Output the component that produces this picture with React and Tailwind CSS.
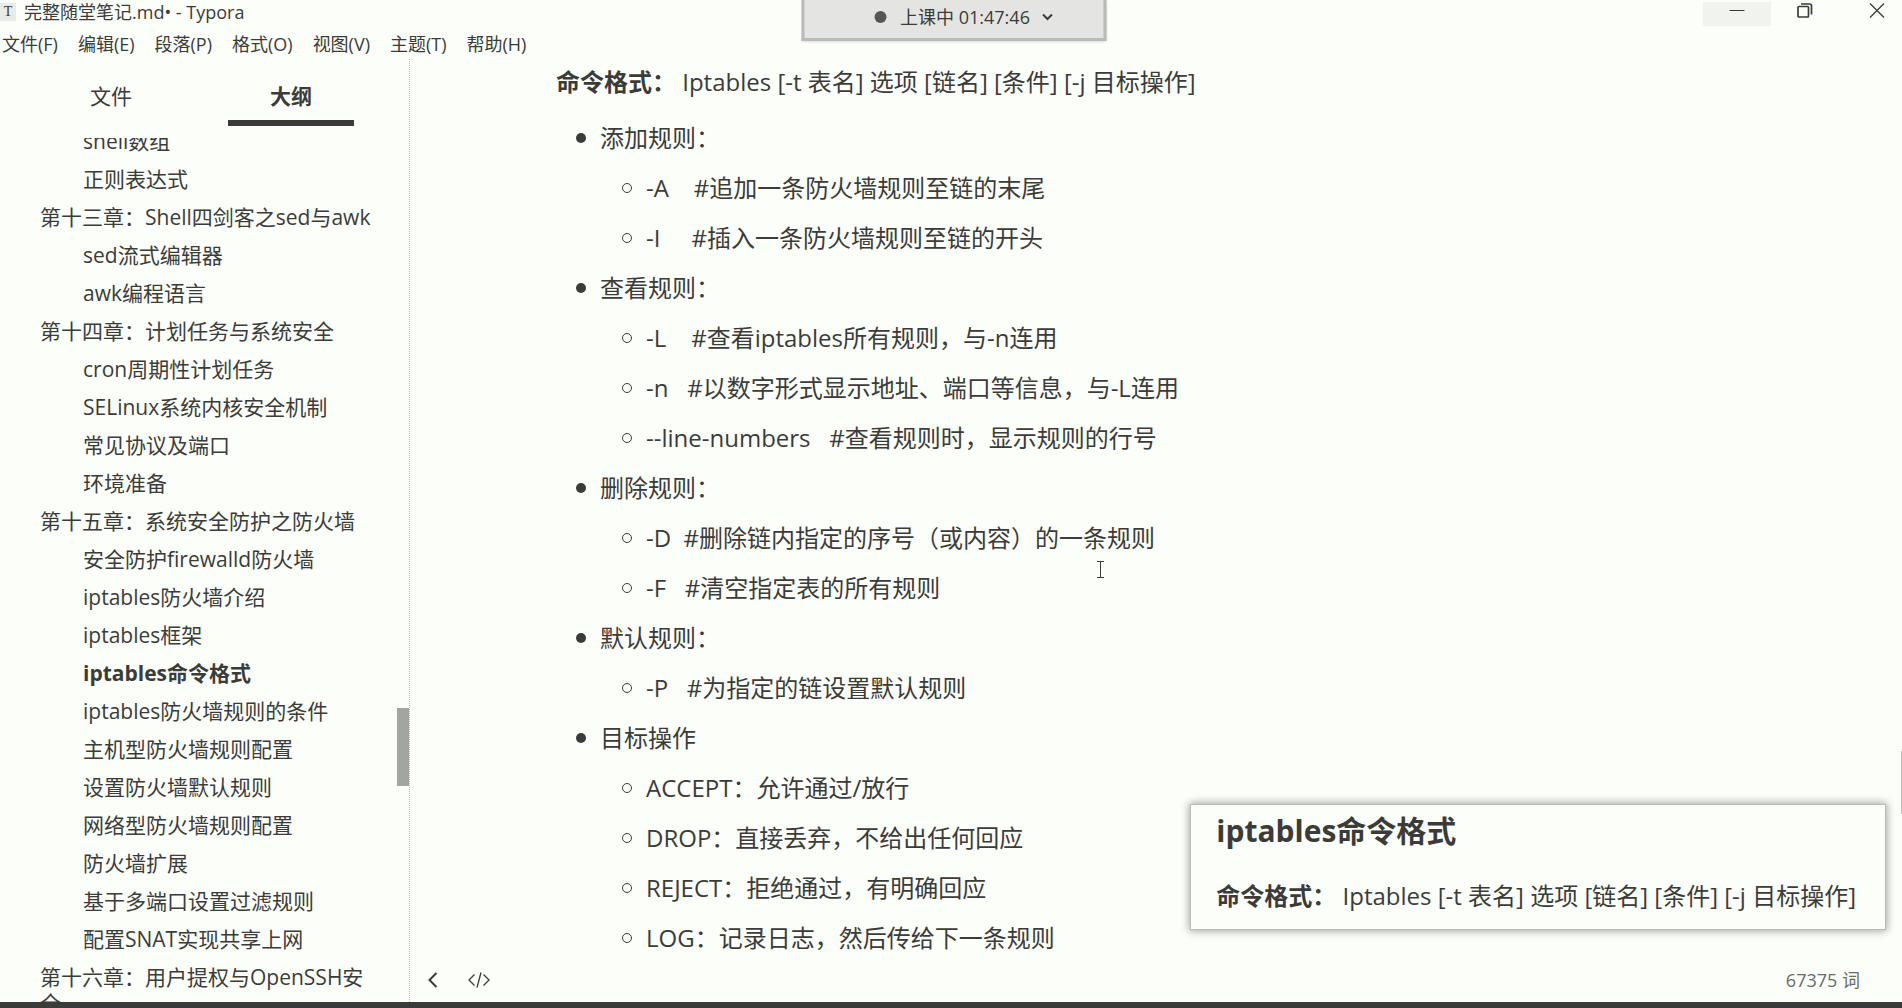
import React from "react";

const menus = ["文件(F)", "编辑(E)", "段落(P)", "格式(O)", "视图(V)", "主题(T)", "帮助(H)"];

const outline = [
  { level: 2, text: "shell数组" },
  { level: 2, text: "正则表达式" },
  { level: 1, text: "第十三章：Shell四剑客之sed与awk" },
  { level: 2, text: "sed流式编辑器" },
  { level: 2, text: "awk编程语言" },
  { level: 1, text: "第十四章：计划任务与系统安全" },
  { level: 2, text: "cron周期性计划任务" },
  { level: 2, text: "SELinux系统内核安全机制" },
  { level: 2, text: "常见协议及端口" },
  { level: 2, text: "环境准备" },
  { level: 1, text: "第十五章：系统安全防护之防火墙" },
  { level: 2, text: "安全防护firewalld防火墙" },
  { level: 2, text: "iptables防火墙介绍" },
  { level: 2, text: "iptables框架" },
  { level: 2, text: "iptables命令格式", active: true },
  { level: 2, text: "iptables防火墙规则的条件" },
  { level: 2, text: "主机型防火墙规则配置" },
  { level: 2, text: "设置防火墙默认规则" },
  { level: 2, text: "网络型防火墙规则配置" },
  { level: 2, text: "防火墙扩展" },
  { level: 2, text: "基于多端口设置过滤规则" },
  { level: 2, text: "配置SNAT实现共享上网" },
  { level: 1, text: "第十六章：用户提权与OpenSSH安全" },
];

const sections = [
  { title: "添加规则：", items: ["-A    #追加一条防火墙规则至链的末尾", "-I     #插入一条防火墙规则至链的开头"] },
  {
    title: "查看规则：",
    items: [
      "-L    #查看iptables所有规则，与-n连用",
      "-n   #以数字形式显示地址、端口等信息，与-L连用",
      "--line-numbers   #查看规则时，显示规则的行号",
    ],
  },
  { title: "删除规则：", items: ["-D  #删除链内指定的序号（或内容）的一条规则", "-F   #清空指定表的所有规则"] },
  { title: "默认规则：", items: ["-P   #为指定的链设置默认规则"] },
  {
    title: "目标操作",
    items: [
      "ACCEPT：允许通过/放行",
      "DROP：直接丢弃，不给出任何回应",
      "REJECT：拒绝通过，有明确回应",
      "LOG：记录日志，然后传给下一条规则",
    ],
  },
];

function CommandFormat() {
  return (
    <>
      <strong className="font-bold">命令格式：</strong> Iptables [-t 表名] 选项 [链名] [条件] [-j 目标操作]
    </>
  );
}

function ClassTimer() {
  return (
    <button
      type="button"
      className="absolute top-0 left-1/2 ml-[3px] flex h-[41px] w-[305px] -translate-x-1/2 items-center justify-center border-x-3 border-b-3 border-[#b9bbb6] bg-[#e4e5e2] pb-1 pl-5 text-lg whitespace-nowrap shadow-sm"
    >
      <span className="mr-3.5 size-3 rounded-full bg-[#565754]" />
      上课中 01:47:46
      <svg className="ml-3 h-2 w-3" viewBox="0 0 12 8" fill="none" stroke="currentColor" strokeWidth="2">
        <path d="M1.5 1.5 6 6l4.5-4.5" />
      </svg>
    </button>
  );
}

function WindowControls() {
  return (
    <div className="flex">
      <button type="button" aria-label="最小化" className="mt-0.5 flex h-6 w-[68px] justify-center bg-[#f1f3ef]">
        <svg className="h-4 w-4" viewBox="0 0 16 16" stroke="currentColor" strokeWidth="1">
          <path d="M0.5 8.5h15" />
        </svg>
      </button>
      <button type="button" aria-label="还原" className="flex h-6 w-[68px] items-start justify-center pt-[3px]">
        <svg className="h-4 w-4" viewBox="0 0 16 16" fill="none" stroke="currentColor" strokeWidth="1.7">
          <rect x="1" y="3.5" width="10.5" height="10.5" rx="1" />
          <path d="M4 1h8.5a2 2 0 0 1 2 2v8.5" />
        </svg>
      </button>
      <button type="button" aria-label="关闭" className="flex h-6 w-[63px] items-start justify-center pt-[3px] pl-3">
        <svg className="h-4 w-4" viewBox="0 0 16 16" fill="none" stroke="currentColor" strokeWidth="1.3">
          <path d="M1 0.5 15 14.5M15 0.5 1 14.5" />
        </svg>
      </button>
    </div>
  );
}

function Sidebar() {
  return (
    <aside className="flex w-[410px] shrink-0 flex-col border-r border-dotted border-[#b9bbb6] text-[21px]">
      <div className="flex pt-[15px] pl-12" role="tablist">
        <button type="button" role="tab" aria-selected="false" className="h-[52px] w-[126px] pb-1.5">
          文件
        </button>
        <button
          type="button"
          role="tab"
          aria-selected="true"
          className="ml-[54px] h-[52px] w-[126px] border-b-6 border-[#3b3c39] font-bold"
        >
          大纲
        </button>
      </div>
      <div className="mt-3 flex min-h-0 flex-1">
        <nav aria-label="大纲" className="min-w-0 flex-1 overflow-hidden">
          <ul className="-mt-4">
            {outline.map((item) => (
              <li key={item.text} className={item.level === 1 ? "pl-10" : "pl-[83px]"}>
                <a
                  href="#outline"
                  aria-current={item.active ? "true" : undefined}
                  className={item.active ? "block py-1.5 pr-4 leading-[26px] font-bold" : "block py-1.5 pr-4 leading-[26px]"}
                >
                  {item.text}
                </a>
              </li>
            ))}
          </ul>
        </nav>
        <div className="flex w-3 flex-col">
          <div className="grow-[569]" />
          <div className="h-[78px] bg-[#a3a5a1]" />
          <div className="grow-[216]" />
        </div>
      </div>
    </aside>
  );
}

function Document() {
  return (
    <article className="min-h-0 flex-1 overflow-hidden pr-36 pl-[146px] text-2xl whitespace-pre">
      <p className="leading-[46px]">
        <CommandFormat />
      </p>
      <ul className="mt-2 leading-[50px]">
        {sections.map((section) => (
          <li key={section.title}>
            <div className="flex items-center pl-5">
              <span className="mr-3.5 size-2.5 rounded-full bg-[#3b3c39]" />
              {section.title}
            </div>
            <ul>
              {section.items.map((item) => (
                <li key={item} className="flex items-center pl-[66px]">
                  <span className="mr-3.5 size-2.5 rounded-full border border-[#3b3c39]" />
                  {item}
                </li>
              ))}
            </ul>
          </li>
        ))}
      </ul>
    </article>
  );
}

export default function App() {
  return (
    <div className="relative flex h-screen flex-col overflow-hidden border-b-6 border-[#3b3c39] bg-[#fcfefa] font-['Open_Sans','Noto_Sans_CJK_SC',sans-serif] text-[#3b3c39]">
      <header>
        <div className="flex h-7 items-start justify-between text-lg leading-6">
          <div className="flex items-center whitespace-pre">
            <span className="mr-2 flex h-[18px] w-4 items-center justify-center bg-[#e9ebe7] font-['Liberation_Serif',serif] text-sm">
              T
            </span>
            完整随堂笔记.md• - Typora
          </div>
          <WindowControls />
        </div>
        <nav className="flex h-[31px] items-center gap-5 pl-0.5 text-lg">
          {menus.map((menu) => (
            <button key={menu} type="button" className="whitespace-nowrap">
              {menu}
            </button>
          ))}
        </nav>
      </header>
      <ClassTimer />
      <div className="flex min-h-0 flex-1">
        <Sidebar />
        <main className="relative flex min-w-0 flex-1 flex-col">
          <Document />
          <footer className="flex h-11 items-center justify-between pr-[42px] pl-[18px]">
            <div className="flex items-center gap-[30px]">
              <button type="button" aria-label="收起侧栏">
                <svg className="h-4 w-2.5" viewBox="0 0 10 16" fill="none" stroke="currentColor" strokeWidth="2">
                  <path d="M8.5 1 1.5 8l7 7" />
                </svg>
              </button>
              <button type="button" aria-label="源代码模式">
                <svg className="h-4 w-[22px]" viewBox="0 0 22 16" fill="none" stroke="currentColor" strokeWidth="1.3">
                  <path d="M6.5 2.5 1 8l5.5 5.5M15.5 2.5 21 8l-5.5 5.5M13 0.5 9 15.5" />
                </svg>
              </button>
            </div>
            <span className="text-lg text-[#6a6b68]">67375 词</span>
          </footer>
          <section className="absolute right-4 bottom-[72px] h-[126px] border border-[#b9bbb6] bg-[#fcfefa] px-[25px] text-2xl whitespace-nowrap shadow-[0_0_8px_1px_#a3a5a1]">
            <h2 className="pt-1 text-[30px] leading-[44px] font-bold">iptables命令格式</h2>
            <p className="pt-5 pr-1 leading-[46px]">
              <CommandFormat />
            </p>
          </section>
          <div className="absolute right-0 bottom-[188px] h-[63px] w-px bg-[#b9bbb6]" />
        </main>
      </div>
      <svg
        className="absolute top-[561px] left-[1097px] h-[17px] w-[7px]"
        viewBox="0 0 7 17"
        fill="none"
        stroke="currentColor"
      >
        <path d="M0 0.5h7M0 16.5h7M3.5 0.5v16" />
      </svg>
    </div>
  );
}
